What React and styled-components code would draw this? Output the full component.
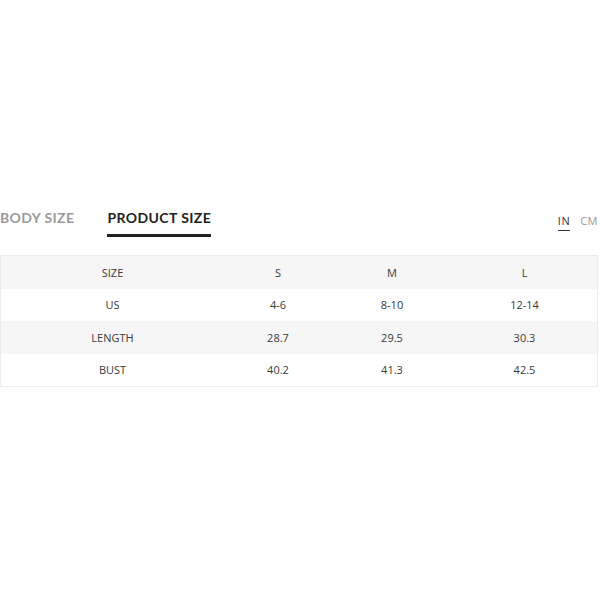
import React, { useState } from 'react';
import styled, { createGlobalStyle } from 'styled-components';

const GlobalStyle = createGlobalStyle`
  body {
    margin: 0;
    background: #fff;
    font-family: 'Open Sans', 'Liberation Sans', sans-serif;
    color: #333;
  }
`;

const Wrapper = styled.div`
  width: 598px;
  padding-top: 208px;
`;

const Header = styled.div`
  display: flex;
  justify-content: space-between;
  align-items: flex-start;
`;

const Tabs = styled.div`
  display: flex;
  gap: 33px;
`;

const Tab = styled.div`
  font-family: 'Lato', 'Open Sans', sans-serif;
  font-size: 14px;
  font-weight: 700;
  letter-spacing: 0.4px;
  line-height: 20px;
  padding-bottom: 6px;
  color: ${(p) => (p.active ? '#222' : '#9a9a9a')};
  border-bottom: 3px solid ${(p) => (p.active ? '#222' : 'transparent')};
  cursor: pointer;
`;

const Units = styled.div`
  display: flex;
  gap: 10px;
  padding-top: 6px;
`;

const Unit = styled.span`
  font-size: 11px;
  line-height: 14px;
  letter-spacing: 0.5px;
  padding-bottom: 2px;
  color: ${(p) => (p.active ? '#333' : '#999')};
  border-bottom: 1px solid ${(p) => (p.active ? '#333' : 'transparent')};
  cursor: pointer;
`;

const Table = styled.div`
  margin-top: 18px;
  border: 1px solid #ececec;
`;

const Row = styled.div`
  display: grid;
  grid-template-columns: 223px 108px 120px 1fr;
  height: 32.5px;
  align-items: center;
  background: ${(p) => (p.shaded ? '#f6f6f6' : '#fff')};
`;

const Cell = styled.div`
  text-align: center;
  font-size: 11px;
  color: #3a3a3a;
`;

const rows = [
  ['SIZE', 'S', 'M', 'L'],
  ['US', '4-6', '8-10', '12-14'],
  ['LENGTH', '28.7', '29.5', '30.3'],
  ['BUST', '40.2', '41.3', '42.5'],
];

export default function App() {
  const [tab, setTab] = useState('product');
  const [unit, setUnit] = useState('in');

  return (
    <Wrapper>
      <GlobalStyle />
      <Header>
        <Tabs>
          <Tab active={tab === 'body'} onClick={() => setTab('body')}>
            BODY SIZE
          </Tab>
          <Tab active={tab === 'product'} onClick={() => setTab('product')}>
            PRODUCT SIZE
          </Tab>
        </Tabs>
        <Units>
          <Unit active={unit === 'in'} onClick={() => setUnit('in')}>
            IN
          </Unit>
          <Unit active={unit === 'cm'} onClick={() => setUnit('cm')}>
            CM
          </Unit>
        </Units>
      </Header>
      <Table>
        {rows.map((row, i) => (
          <Row key={row[0]} shaded={i % 2 === 0}>
            {row.map((c) => (
              <Cell key={c}>{c}</Cell>
            ))}
          </Row>
        ))}
      </Table>
    </Wrapper>
  );
}
